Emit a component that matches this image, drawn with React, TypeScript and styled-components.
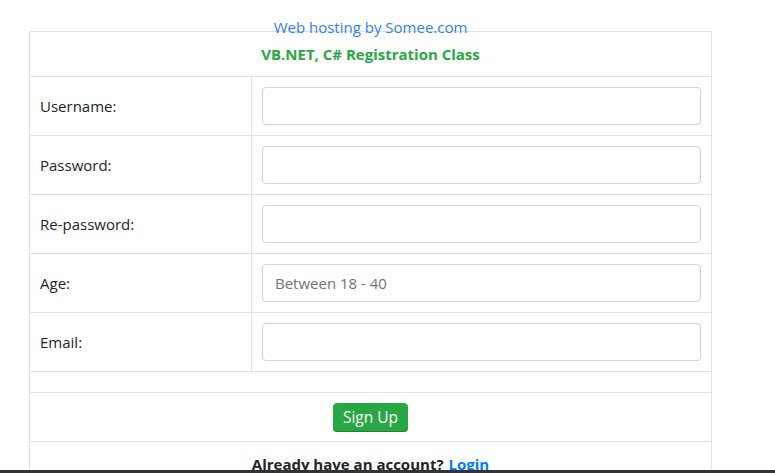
import React from "react";
import styled, { createGlobalStyle } from "styled-components";

const Global = createGlobalStyle`
  html, body { margin: 0; padding: 0; background: #fff; }
  body { font-family: "Open Sans", "Noto Sans", sans-serif; color: #212529; overflow: hidden; }
  * { box-sizing: border-box; }
`;

const Page = styled.div`
  position: relative;
  width: 775px;
  height: 473px;
  overflow: hidden;
  padding: 31px 0 0 29px;
`;

const HostLink = styled.a`
  position: absolute;
  top: 17px;
  left: 0;
  width: 741px;
  text-align: center;
  font-size: 15px;
  color: #2f7ff7;
  text-decoration: none;
  z-index: 2;
  line-height: 20px;
`;

const Card = styled.div`
  width: 683px;
  border: 1px solid #dee2e6;
  border-bottom: none;
  display: flex;
  flex-direction: column;
`;

const Row = styled.div<{ $h: number }>`
  height: ${(p) => p.$h}px;
  border-bottom: 1px solid #dee2e6;
  display: flex;
  align-items: center;
  justify-content: center;
`;

const Title = styled.div`
  color: #28a745;
  font-weight: 700;
  font-size: 15px;
`;

const FieldRow = styled.div`
  height: 59px;
  border-bottom: 1px solid #dee2e6;
  display: grid;
  grid-template-columns: 222px 1fr;
`;

const Label = styled.div`
  border-right: 1px solid #dee2e6;
  padding-left: 10px;
  display: flex;
  align-items: center;
  font-size: 15px;
  color: #212529;
`;

const InputCell = styled.div`
  padding: 10px;
`;

const Input = styled.input`
  width: 439px;
  height: 38px;
  border: 1px solid #ced4da;
  border-radius: 4px;
  padding: 0 12px;
  font-family: inherit;
  font-size: 15px;
  color: #495057;
  background: #fff;
  outline: none;
  &::placeholder { color: #6c757d; }
`;

const Button = styled.button`
  width: 75px;
  height: 28px;
  background: #28a745;
  border: 1px solid #28a745;
  border-radius: 4px;
  color: #fff;
  font-family: inherit;
  font-size: 15.5px;
  padding: 0;
  line-height: 26px;
  box-shadow: 0 1px 0 #1e7e34;
`;

const LoginRow = styled.div`
  height: 32px;
  padding-top: 12px;
  display: flex;
  justify-content: center;
  align-items: flex-start;
  font-weight: 700;
  font-size: 15px;
  line-height: 20px;
  color: #212529;
`;

const LoginLink = styled.a`
  color: #007bff;
  text-decoration: none;
  margin-left: 5px;
`;

const BottomBar = styled.div`
  position: fixed;
  left: 0;
  right: 0;
  bottom: 0;
  height: 3px;
  background: #333;
  z-index: 3;
`;

const fields = [
  { label: "Username:", placeholder: "" },
  { label: "Password:", placeholder: "" },
  { label: "Re-password:", placeholder: "" },
  { label: "Age:", placeholder: "Between 18 - 40" },
  { label: "Email:", placeholder: "" },
];

export default function App() {
  return (
    <Page>
      <Global />
      <HostLink href="#">Web hosting by Somee.com</HostLink>
      <Card>
        <Row $h={45}>
          <Title>VB.NET, C# Registration Class</Title>
        </Row>
        {fields.map((f) => (
          <FieldRow key={f.label}>
            <Label>{f.label}</Label>
            <InputCell>
              <Input placeholder={f.placeholder} />
            </InputCell>
          </FieldRow>
        ))}
        <Row $h={21} />
        <Row $h={49}>
          <Button>Sign Up</Button>
        </Row>
        <LoginRow>
          Already have an account?<LoginLink href="#">Login</LoginLink>
        </LoginRow>
      </Card>
      <BottomBar />
    </Page>
  );
}
